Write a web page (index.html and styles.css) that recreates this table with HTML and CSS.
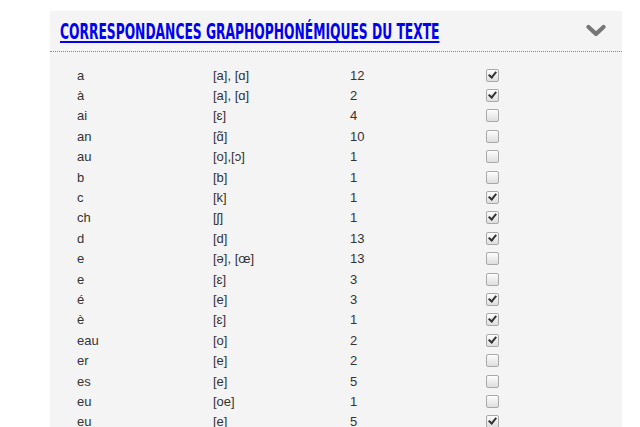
FILE: index.html
```html
<!DOCTYPE html>
<html lang="fr">
<head>
<meta charset="utf-8">
<link rel="stylesheet" href="styles.css">
</head>
<body>
<section class="panel">
  <header class="panel-head">
    <div class="title-box"><a class="title" href="#">Correspondances graphophonémiques du texte</a></div>
    <svg class="chev" width="20" height="14" viewBox="0 0 20 14"><path d="M2.5 3 L10 10 L17.5 3" fill="none" stroke="#777" stroke-width="4.2" stroke-linecap="round" stroke-linejoin="round"/></svg>
  </header>
  <div class="rows">
    <div class="row"><span>a</span><span>[a], [ɑ]</span><span>12</span><span class="cb on"></span></div>
    <div class="row"><span>à</span><span>[a], [ɑ]</span><span>2</span><span class="cb on"></span></div>
    <div class="row"><span>ai</span><span>[ɛ]</span><span>4</span><span class="cb"></span></div>
    <div class="row"><span>an</span><span>[ɑ̃]</span><span>10</span><span class="cb"></span></div>
    <div class="row"><span>au</span><span>[o],[ɔ]</span><span>1</span><span class="cb"></span></div>
    <div class="row"><span>b</span><span>[b]</span><span>1</span><span class="cb"></span></div>
    <div class="row"><span>c</span><span>[k]</span><span>1</span><span class="cb on"></span></div>
    <div class="row"><span>ch</span><span>[ʃ]</span><span>1</span><span class="cb on"></span></div>
    <div class="row"><span>d</span><span>[d]</span><span>13</span><span class="cb on"></span></div>
    <div class="row"><span>e</span><span>[ə], [œ]</span><span>13</span><span class="cb"></span></div>
    <div class="row"><span>e</span><span>[ɛ]</span><span>3</span><span class="cb"></span></div>
    <div class="row"><span>é</span><span>[e]</span><span>3</span><span class="cb on"></span></div>
    <div class="row"><span>è</span><span>[ɛ]</span><span>1</span><span class="cb on"></span></div>
    <div class="row"><span>eau</span><span>[o]</span><span>2</span><span class="cb on"></span></div>
    <div class="row"><span>er</span><span>[e]</span><span>2</span><span class="cb"></span></div>
    <div class="row"><span>es</span><span>[e]</span><span>5</span><span class="cb"></span></div>
    <div class="row"><span>eu</span><span>[oe]</span><span>1</span><span class="cb"></span></div>
    <div class="row"><span>eu</span><span>[e]</span><span>5</span><span class="cb on"></span></div>
  </div>
</section>
</body>
</html>
```

FILE: styles.css
```css
html, body {
  margin: 0;
  background: #fff;
  overflow: hidden;
}
body {
  padding: 11px 18px 0 50px;
  font-family: "Liberation Sans", Arial, sans-serif;
}
.panel {
  background: #f4f4f4;
  width: 572px;
  height: 420px;
}
.panel-head {
  height: 40px;
  border-bottom: 1px dotted #8a8a8a;
  display: flex;
  align-items: center;
  justify-content: space-between;
  padding: 0 16px 0 10px;
}
.title-box {
  width: 381px;
  white-space: nowrap;
  margin-top: 1px;
}
.title {
  display: inline-block;
  font-family: "DejaVu Sans", sans-serif;
  font-stretch: condensed;
  font-weight: 600;
  font-size: 22px;
  line-height: 24px;
  text-transform: uppercase;
  color: #0000ee;
  text-decoration: underline;
  text-decoration-thickness: 2px;
  text-underline-offset: 2px;
  text-decoration-skip-ink: none;
  transform: scaleX(0.621);
  transform-origin: left center;
}
.chev {
  display: block;
}
.rows {
  padding: 13px 0 0 27px;
}
.row {
  display: grid;
  grid-template-columns: 136px 137px 136px 20px;
  height: 20.4px;
  align-items: center;
  font-size: 13px;
  color: #333;
}
.cb {
  width: 11px;
  height: 11px;
  border: 1px solid #a9a9a9;
  border-radius: 2px;
  background: linear-gradient(#fdfdfd, #dedede);
  position: relative;
  box-sizing: content-box;
}
.cb.on::after {
  content: "";
  position: absolute;
  left: 3px;
  top: 0px;
  width: 3px;
  height: 6px;
  border: solid #333;
  border-width: 0 2px 2px 0;
  transform: rotate(40deg);
}
```
